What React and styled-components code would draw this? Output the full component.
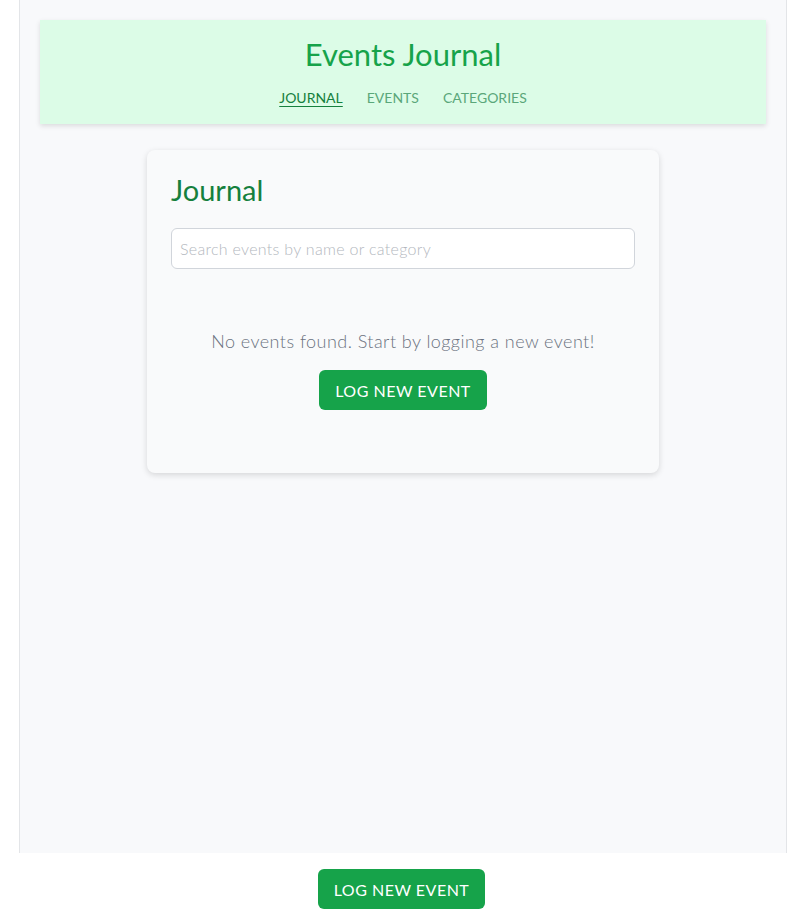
import React from "react";
import styled, { createGlobalStyle } from "styled-components";

const GlobalStyle = createGlobalStyle`
  body {
    margin: 0;
    background: #fff;
    font-family: "Lato", "Open Sans", sans-serif;
  }
  * {
    box-sizing: border-box;
  }
`;

const Page = styled.div`
  padding-left: 19px;
`;

const Frame = styled.div`
  width: 768px;
  height: 853px;
  padding: 20px 20px 0;
  background: #f8f9fb;
  border-left: 1px solid #e3e5e8;
  border-right: 1px solid #e3e5e8;
`;

const Header = styled.header`
  background: #dcfce7;
  padding: 14px 0 16px;
  text-align: center;
  box-shadow: 0 2px 5px rgba(0, 0, 0, 0.12);
`;

const Title = styled.h1`
  margin: 0 0 14px;
  font-size: 31px;
  line-height: 40px;
  font-weight: 400;
  color: #16a34a;
`;

const Nav = styled.nav`
  display: flex;
  justify-content: center;
  gap: 24px;
`;

const NavLink = styled.a`
  font-size: 14px;
  line-height: 20px;
  text-transform: uppercase;
  color: ${(p) => (p.$active ? "#15803d" : "#5aa77a")};
  text-decoration: ${(p) => (p.$active ? "underline" : "none")};
  text-underline-offset: 3px;
  cursor: pointer;
`;

const Card = styled.section`
  width: 512px;
  margin: 26px auto 0;
  padding: 24px;
  background: #f9fafb;
  border-radius: 8px;
  box-shadow: 0 2px 6px rgba(0, 0, 0, 0.14);
`;

const CardTitle = styled.h2`
  margin: 0 0 22px;
  font-size: 29px;
  line-height: 32px;
  font-weight: 400;
  color: #15803d;
`;

const SearchInput = styled.input`
  display: block;
  width: 100%;
  height: 41px;
  padding: 0 8px;
  font-family: inherit;
  font-size: 16px;
  letter-spacing: 0.3px;
  color: #374151;
  background: #fff;
  border: 1px solid #d1d5db;
  border-radius: 6px;
  outline: none;

  &::placeholder {
    color: #b3b7be;
    font-weight: 300;
  }
`;

const Empty = styled.div`
  display: flex;
  flex-direction: column;
  align-items: center;
  padding: 58px 0 39px;
  gap: 15px;
`;

const EmptyText = styled.p`
  margin: 0;
  font-size: 18px;
  line-height: 28px;
  font-weight: 300;
  letter-spacing: 0.45px;
  color: #6b7280;
`;

const Button = styled.button`
  height: 40px;
  padding: 0 16px;
  background: #16a34a;
  color: #fff;
  border: none;
  border-radius: 6px;
  font-family: inherit;
  font-size: 16px;
  letter-spacing: 0.5px;
  text-transform: uppercase;
  cursor: pointer;
`;

const Footer = styled.div`
  display: flex;
  justify-content: center;
  padding-top: 16px;
`;

export default function App() {
  return (
    <>
      <GlobalStyle />
      <Page>
        <Frame>
          <Header>
            <Title>Events Journal</Title>
            <Nav>
              <NavLink $active>Journal</NavLink>
              <NavLink>Events</NavLink>
              <NavLink>Categories</NavLink>
            </Nav>
          </Header>
          <Card>
            <CardTitle>Journal</CardTitle>
            <SearchInput placeholder="Search events by name or category" />
            <Empty>
              <EmptyText>No events found. Start by logging a new event!</EmptyText>
              <Button>Log new event</Button>
            </Empty>
          </Card>
        </Frame>
      </Page>
      <Footer>
        <Button>Log new event</Button>
      </Footer>
    </>
  );
}
